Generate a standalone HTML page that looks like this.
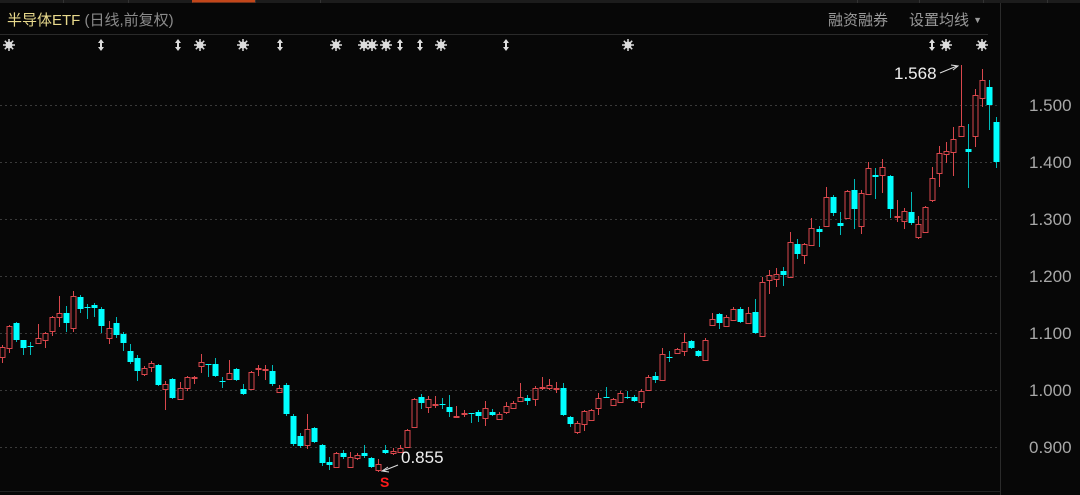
<!DOCTYPE html>
<html><head><meta charset="utf-8"><style>
*{margin:0;padding:0}
body{width:1080px;height:495px;background:#070707;overflow:hidden;position:relative;font-family:"Liberation Sans","Noto Sans CJK SC",sans-serif}
.t{position:absolute;white-space:nowrap}
.lab{position:absolute;left:1029px;color:#a8a8a8;font-size:17px;line-height:20px}
</style></head><body>
<svg id="s" width="1080" height="495" style="position:absolute;left:0;top:0">
<rect x="0" y="0" width="1080" height="3" fill="#1c1c1c"/>
<g stroke="#333" stroke-width="1"><line x1="63.5" y1="0" x2="63.5" y2="3"/><line x1="128.5" y1="0" x2="128.5" y2="3"/><line x1="192.5" y1="0" x2="192.5" y2="3"/><line x1="255.5" y1="0" x2="255.5" y2="3"/><line x1="320.5" y1="0" x2="320.5" y2="3"/><line x1="857.5" y1="0" x2="857.5" y2="3"/><line x1="919.5" y1="0" x2="919.5" y2="3"/><line x1="983.5" y1="0" x2="983.5" y2="3"/><line x1="1047.5" y1="0" x2="1047.5" y2="3"/></g>
<rect x="192" y="0" width="63" height="2.5" fill="#c2461a"/>
<line x1="0" y1="34.5" x2="988" y2="34.5" stroke="#2a2a2a"/>
<line x1="1000.5" y1="3" x2="1000.5" y2="495" stroke="#2a2a2a"/>
<g stroke="#3a3a3a" stroke-dasharray="2,3">
<line x1="0" y1="105.5" x2="1000" y2="105.5"/><line x1="0" y1="162.5" x2="1000" y2="162.5"/><line x1="0" y1="219.5" x2="1000" y2="219.5"/><line x1="0" y1="276.5" x2="1000" y2="276.5"/><line x1="0" y1="333.5" x2="1000" y2="333.5"/><line x1="0" y1="390.5" x2="1000" y2="390.5"/><line x1="0" y1="447.5" x2="1000" y2="447.5"/>
</g>
<line x1="0" y1="491.5" x2="1000" y2="491.5" stroke="#222"/>
<g id="c"></g>
<g id="mk"></g>
<g stroke="#ddd" stroke-width="1" fill="none"><line x1="940" y1="73" x2="957" y2="66"/><path d="M951 65 L958 66 L953 70"/><line x1="398" y1="465" x2="383" y2="471"/><path d="M388 467 L382 471 L389 472"/></g>
</svg>
<div class="t" style="left:7px;top:9px;font-size:15px;color:#e8d98c">半导体ETF <span style="color:#8a8a8a">(日线,前复权)</span></div>
<div class="t" style="left:828px;top:9px;font-size:15px;color:#9a9a9a">融资融券</div>
<div class="t" style="left:909px;top:9px;font-size:15px;color:#9a9a9a">设置均线 <span style="font-size:9px;position:relative;top:-2px">▼</span></div>
<div class="t" style="left:894px;top:64px;font-size:17px;color:#f0f0f0">1.568</div>
<div class="t" style="left:401px;top:448px;font-size:17px;color:#f0f0f0">0.855</div>
<div class="t" style="left:380px;top:474px;font-size:14px;color:#ff1a1a;font-weight:bold">S</div>
<div class="lab" style="top:96px">1.500</div>
<div class="lab" style="top:153px">1.400</div>
<div class="lab" style="top:210px">1.300</div>
<div class="lab" style="top:267px">1.200</div>
<div class="lab" style="top:324px">1.100</div>
<div class="lab" style="top:381px">1.000</div>
<div class="lab" style="top:438px">0.900</div>
<script>
var d="r 347 357 345 363|r 326 348 325 353|c 323 340 322 342|c 340 348 340 355|c 346 347 342 355|r 338 343 324 344|r 333 340 332 348|r 317 331 316 336|r 313 317 296 327|c 313 323 306 332|r 296 328 291 332|c 297 309 295 313|c 307 308 304 319|c 305 308 303 317|c 309 326 307 333|r 328 338 321 344|c 323 335 317 338|c 334 343 332 351|c 351 362 344 364|c 358 371 355 381|r 368 374 366 376|r 363 367 361 372|c 365 385 364 386|r 384 389 381 410|c 379 398 378 399|r 388 399 382 400|r 377 388 376 391|r 377 378 376 384|r 362 366 354 373|c 364 365 364 377|c 364 376 358 377|c 381 382 377 388|r 373 379 360 380|c 369 380 368 381|c 389 394 384 395|r 372 389 371 390|r 368 369 365 376|r 369 370 365 380|c 371 384 365 386|r 388 392 385 393|c 385 414 383 416|c 416 444 414 446|c 436 446 433 448|r 429 445 414 449|c 428 442 427 443|c 445 463 444 466|c 462 465 457 470|r 453 467 452 468|c 453 457 450 459|r 457 467 452 468|r 455 458 453 460|c 453 456 445 458|c 458 467 457 468|r 464 470 459 472|c 450 453 445 454|r 451 453 448 455|r 448 452 445 453|r 430 447 429 448|r 399 427 398 428|c 397 403 394 409|r 399 407 396 413|r 404 405 396 408|c 404 405 398 409|c 407 412 395 417|r 416 417 406 418|r 413 414 410 417|c 413 414 413 423|c 412 416 410 422|r 408 418 401 426|c 412 415 409 416|r 414 419 412 420|r 406 412 402 414|r 403 408 401 409|r 397 401 383 402|c 398 401 395 405|r 388 399 386 406|r 387 388 377 390|r 385 388 379 390|r 388 389 382 393|c 388 415 383 416|c 417 424 416 427|r 423 432 421 434|r 411 424 410 431|r 410 420 409 421|r 398 408 393 415|c 397 398 387 398|r 399 405 398 406|r 393 402 391 403|c 397 398 391 399|c 397 401 395 402|r 391 402 389 408|r 377 390 375 391|c 376 380 372 383|r 354 380 348 381|c 357 358 351 362|r 349 353 348 354|r 342 351 333 356|c 341 348 340 349|c 351 356 350 357|r 340 360 338 361|r 319 325 313 326|c 314 323 313 329|r 317 326 315 327|r 309 320 307 321|c 309 322 307 323|r 313 323 307 324|c 312 333 299 334|r 282 336 277 337|r 275 280 270 294|r 274 279 268 287|c 271 275 267 286|r 242 277 232 278|c 244 254 239 259|r 244 255 243 264|r 228 245 218 246|c 229 232 226 247|r 197 226 187 227|c 197 213 195 216|c 223 226 212 235|r 191 218 190 219|c 190 209 179 229|r 193 226 190 234|r 168 194 162 195|c 175 177 168 199|r 167 175 159 193|c 176 209 175 218|r 216 217 200 222|r 211 221 208 229|c 212 223 192 225|r 224 237 216 239|r 207 232 206 233|r 178 200 167 202|r 153 173 146 187|r 151 154 142 163|r 139 152 127 176|r 126 136 65 137|c 149 152 124 188|r 95 136 89 147|r 80 98 69 107|c 87 105 80 130|c 122 162 117 168".split("|");
var h="";
d.forEach(function(s,i){var p=s.split(" "),t=p[0],a=+p[1],b=+p[2],wt=+p[3],wb=+p[4];var x=Math.round(2+7.1*i)+0.5;
if(b-a<1)b=a+1;
if(t=="r"){h+='<line x1="'+x+'" y1="'+wt+'" x2="'+x+'" y2="'+a+'" stroke="#d9474c"/><line x1="'+x+'" y1="'+b+'" x2="'+x+'" y2="'+wb+'" stroke="#d9474c"/>';
h+='<rect x="'+(x-2.5)+'" y="'+(a+0.5)+'" width="5" height="'+(b-a)+'" fill="none" stroke="#d9474c"/>';}
else{h+='<line x1="'+x+'" y1="'+wt+'" x2="'+x+'" y2="'+wb+'" stroke="#00b8b8"/><rect x="'+(x-3)+'" y="'+a+'" width="6" height="'+(b-a)+'" fill="#00ffff"/>';}
});
document.getElementById("c").innerHTML=h;
var m=[[9,0],[101,1],[178,1],[200,0],[243,0],[280,1],[336,0],[364,0],[372,0],[386,0],[400,1],[420,1],[441,0],[506,1],[628,0],[932,1],[946,0],[982,0]],mh="";
m.forEach(function(q){var x=q[0],y=45;
if(q[1]==0){mh+='<circle cx="'+x+'" cy="'+y+'" r="3.5" fill="#dcdcdc"/>';for(var k=0;k<8;k++){var an=k*Math.PI/4;mh+='<line x1="'+x+'" y1="'+y+'" x2="'+(x+6*Math.cos(an)).toFixed(1)+'" y2="'+(y+6*Math.sin(an)).toFixed(1)+'" stroke="#dcdcdc" stroke-width="1.5"/>';}}
else{mh+='<path d="M'+(x-3)+' '+(y-2)+' L'+x+' '+(y-6)+' L'+(x+3)+' '+(y-2)+' Z M'+(x-3)+' '+(y+2)+' L'+x+' '+(y+6)+' L'+(x+3)+' '+(y+2)+' Z" fill="#dcdcdc"/><rect x="'+(x-1)+'" y="'+(y-3)+'" width="2" height="6" fill="#dcdcdc"/>';}
});
document.getElementById("mk").innerHTML=mh;
</script>
</body></html>
